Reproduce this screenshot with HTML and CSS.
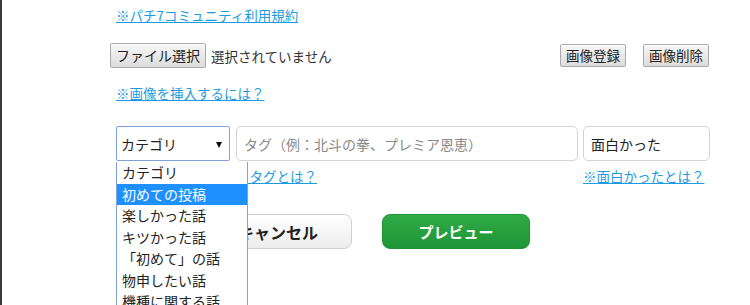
FILE: index.html
```html
<!DOCTYPE html>
<html lang="ja">
<head>
  <meta charset="UTF-8">
  <title>投稿フォーム</title>
  <link rel="stylesheet" href="styles.css">
</head>
<body>
  <div class="page">
    <div class="post-form">
      <p class="line"><a href="#">※パチ7コミュニティ利用規約</a></p>

      <div class="file-row">
        <div class="file-pick">
          <button class="sys-btn file-btn" type="button">ファイル選択</button>
          <span class="file-name">選択されていません</span>
        </div>
        <div class="img-btns">
          <button class="sys-btn" type="button">画像登録</button>
          <button class="sys-btn" type="button">画像削除</button>
        </div>
      </div>

      <p class="line help-img"><a href="#">※画像を挿入するには？</a></p>

      <div class="fields">
        <div class="field cat">
          <div class="select">
            <span>カテゴリ</span>
            <span class="arrow"></span>
          </div>
          <ul class="options">
            <li>カテゴリ</li>
            <li class="active">初めての投稿</li>
            <li>楽しかった話</li>
            <li>キツかった話</li>
            <li>「初めて」の話</li>
            <li>物申したい話</li>
            <li>機種に関する話</li>
          </ul>
        </div>
        <div class="field tag">
          <input class="text-in" type="text" placeholder="タグ（例：北斗の拳、プレミア恩恵）">
          <a class="sub-link" href="#">※タグとは？</a>
        </div>
        <div class="field fun">
          <input class="text-in" type="text" value="面白かった">
          <a class="sub-link" href="#">※面白かったとは？</a>
        </div>
      </div>

      <div class="actions">
        <button class="big-btn cancel" type="button">キャンセル</button>
        <button class="big-btn preview" type="button">プレビュー</button>
      </div>
    </div>
  </div>
</body>
</html>
```

FILE: styles.css
```css
body { margin: 0; font-family: "Noto Sans CJK JP", "Noto Sans", sans-serif; color: #333; background: #fff; overflow: hidden; }
.page { min-height: 100vh; border-left: 2px solid #3a3a3a; padding-top: 5px; box-sizing: border-box; }
.post-form { width: 594px; margin-left: 114px; }
a { color: #1d9be0; text-decoration: underline; }

.line { margin: 0; font-size: 13.5px; line-height: 20px; }
.help-img { margin-top: 15px; }

.file-row { display: flex; justify-content: space-between; align-items: center; margin: 18px 1px 0 -6px; height: 25px; }
.file-pick { display: flex; align-items: center; }
.file-name { font-size: 13.5px; margin-left: 5px; color: #333; }
.sys-btn { font-family: inherit; font-size: 13.5px; color: #222; height: 23px; padding: 0 5px; line-height: 21px; border: 1px solid #a9a9a9; border-radius: 2px; background: linear-gradient(#f7f7f7, #dcdcdc); box-shadow: inset 0 1px 0 #fff; }
.file-btn { height: 25px; padding: 0 5px; font-size: 14px; }
.img-btns { display: flex; gap: 17px; }
.img-btns .sys-btn { width: 66px; padding: 0; }

.fields { display: flex; margin-top: 23px; }
.field { position: relative; display: flex; flex-direction: column; }
.cat { width: 114px; margin-right: 6px; }
.tag { width: 342px; margin-right: 5px; }
.fun { width: 127px; }

.select { height: 35px; box-sizing: border-box; border: 1px solid #7ea3dc; border-radius: 2px; display: flex; align-items: center; justify-content: space-between; padding: 0 7px 0 4px; font-size: 14px; color: #222; background: #fff; }
.arrow { width: 0; height: 0; border-left: 3.5px solid transparent; border-right: 3.5px solid transparent; border-top: 6px solid #111; margin-top: 2px; }

.options { position: absolute; top: 36px; left: 0; width: 132px; margin: 0; padding: 0; list-style: none; border: 1px solid #7ea3dc; border-top: none; background: #fff; box-sizing: border-box; z-index: 2; }
.options li { height: 21.5px; line-height: 21.5px; padding-left: 5px; font-size: 14px; color: #222; white-space: nowrap; }
.options .active { background: #1e90ff; color: #fff; }

.text-in { height: 35px; box-sizing: border-box; border: 1px solid #d4d4d4; border-radius: 5px; padding: 0 7px; font-family: inherit; font-size: 14px; color: #222; outline: none; }
.text-in::placeholder { color: #8a8a8a; }
.sub-link { font-size: 13.5px; line-height: 20px; margin-top: 5px; align-self: flex-start; }

.actions { display: flex; gap: 30px; margin: 28px 0 0 88px; }
.big-btn { width: 148px; height: 35px; border-radius: 8px; font-family: inherit; font-weight: bold; font-size: 15px; cursor: pointer; }
.cancel { border: 1px solid #cfcfcf; background: linear-gradient(#ffffff, #ececec); color: #222; font-size: 16px; }
.preview { border: 1px solid #1f9236; background: linear-gradient(#2eab45, #1f9538); color: #fff; }
```
